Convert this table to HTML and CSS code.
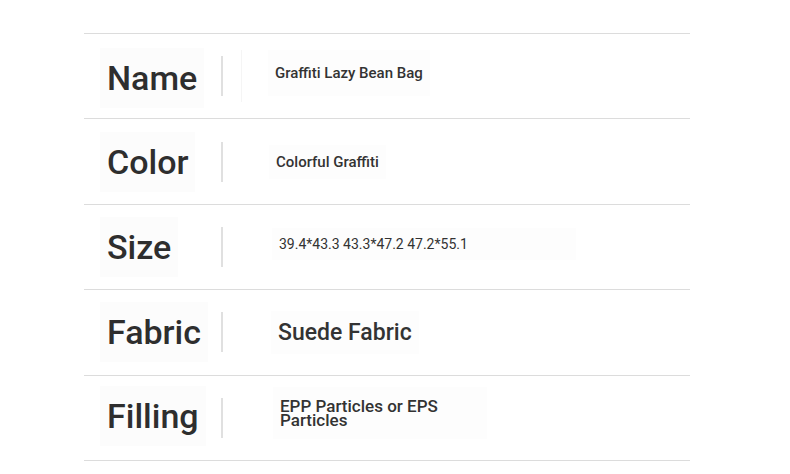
FILE: index.html
```html
<!DOCTYPE html>
<html>
<head>
<meta charset="utf-8">
<link rel="stylesheet" href="styles.css">
</head>
<body>
<div class="spec">
  <div class="row">
    <div class="label l-name"><span class="lbox">Name</span></div>
    <div class="sep"></div>
    <div class="value v-name"><span class="vbox">Graffiti Lazy Bean Bag</span></div>
  </div>
  <div class="row">
    <div class="label"><span class="lbox">Color</span></div>
    <div class="sep"></div>
    <div class="value v-color"><span class="vbox">Colorful Graffiti</span></div>
  </div>
  <div class="row">
    <div class="label"><span class="lbox">Size</span></div>
    <div class="sep"></div>
    <div class="value v-size"><span class="vbox">39.4*43.3 43.3*47.2 47.2*55.1</span></div>
  </div>
  <div class="row">
    <div class="label"><span class="lbox">Fabric</span></div>
    <div class="sep"></div>
    <div class="value v-fabric"><span class="vbox">Suede Fabric</span></div>
  </div>
  <div class="row">
    <div class="label l-filling"><span class="lbox">Filling</span></div>
    <div class="sep"></div>
    <div class="value v-filling"><span class="vbox">EPP Particles or EPS Particles</span></div>
  </div>
</div>
</body>
</html>
```
FILE: styles.css
```css
html, body {
  margin: 0;
  padding: 0;
  background: #ffffff;
}
body {
  font-family: Roboto, "Liberation Sans", sans-serif;
  color: #333333;
}
.spec {
  margin: 33px 0 0 84px;
  width: 606px;
  border-top: 1px solid #dcdcdc;
}
.row {
  display: grid;
  grid-template-columns: 137px 2px 1fr;
  align-items: center;
  height: 84.4px;
  border-bottom: 1px solid #dcdcdc;
}
.label {
  padding-left: 16px;
}
.lbox {
  display: inline-block;
  font-size: 34px;
  font-weight: 500;
  line-height: 40px;
  padding: 10px 7px;
  background: #fcfcfc;
  color: #2e2e2e;
}
.l-name .lbox {
  margin-top: 4px;
}
.l-filling .lbox {
  margin-top: -4px;
}
.sep {
  height: 40px;
  background: #e0e0e0;
}
.value {
  padding-left: 46px;
}
.vbox {
  display: inline-block;
  font-weight: 500;
  padding: 8px 7px;
  background: #fdfdfd;
  color: #333333;
}
.v-name {
  display: flex;
  align-items: center;
  padding-left: 18px;
}
.v-name .vbox {
  font-size: 15px;
  margin-top: -6px;
  margin-left: 26px;
  padding: 14px 7px;
}
.v-name::before {
  content: "";
  width: 1px;
  height: 52px;
  background: #f5f5f5;
}
.v-color .vbox {
  font-size: 15px;
}
.v-size {
  padding-left: 49px;
}
.v-size .vbox {
  font-size: 14px;
  font-weight: 400;
  margin-top: -6px;
  width: 290px;
}
.v-fabric {
  padding-left: 48px;
}
.v-fabric .vbox {
  font-size: 23px;
}
.v-filling {
  padding-left: 50px;
}
.v-filling .vbox {
  font-size: 17px;
  line-height: 14px;
  width: 200px;
  margin-top: -10px;
  padding: 12px 7px;
}
```
